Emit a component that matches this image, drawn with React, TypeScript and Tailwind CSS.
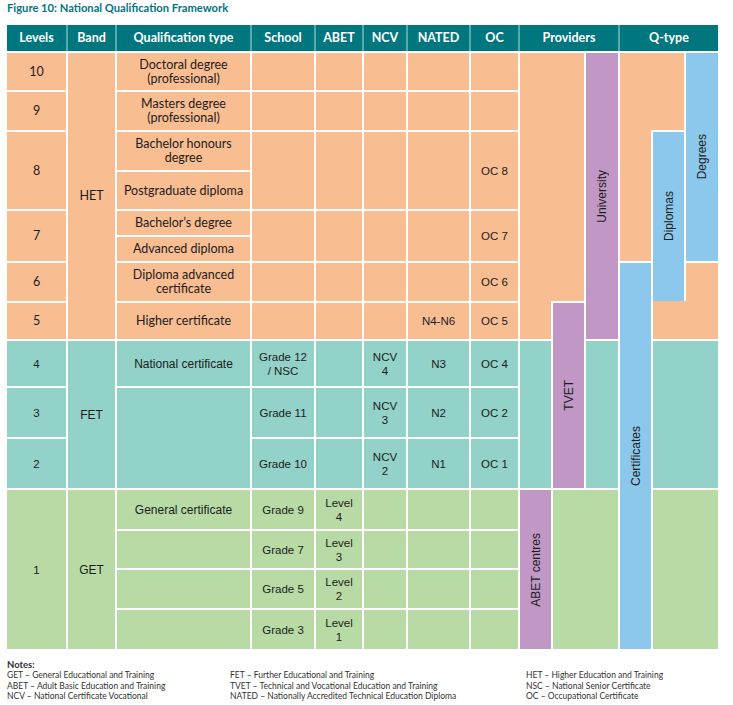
import React from "react";

const P = "bg-[#f9bd92]";
const T = "bg-[#93d2c8]";
const G = "bg-[#b8dba5]";
const U = "bg-[#c197c5]";
const B = "bg-[#8bc8ec]";

const lato = "font-['Lato',sans-serif] text-[12.5px]";
const arial = "font-['Liberation_Sans',Arial,sans-serif] text-[11.5px]";
const arial12 = "font-['Liberation_Sans',Arial,sans-serif] text-[12px]";

const COLS =
  "grid-cols-[59px_47px_133px_62px_46px_42px_61px_47px_31px_31px_32px_31px_31px_32px]";
const ROWS =
  "grid-rows-[37px_38px_38px_37px_24px_24px_38px_36px_45px_49px_49px_39px_37px_38px_39px]";

const rowPos = [
  "row-start-1",
  "row-start-2",
  "row-start-3 row-span-2",
  "row-start-5 row-span-2",
  "row-start-7",
  "row-start-8",
  "row-start-9",
  "row-start-10",
  "row-start-11",
  "row-start-12",
  "row-start-13",
  "row-start-14",
  "row-start-15",
];
const rowBg = [P, P, P, P, P, P, T, T, T, G, G, G, G];

type Cell = { pos: string; bg: string; text?: React.ReactNode; font?: string };

function Box({ pos, bg, text, font }: Cell) {
  return (
    <div
      className={`${pos} ${bg} flex items-center justify-center text-center text-[#1c1c1c] ${
        font ?? arial
      } leading-[14px]`}
    >
      {text}
    </div>
  );
}

function V({ children }: { children: React.ReactNode }) {
  return (
    <span
      className={`font-['Liberation_Sans',Arial,sans-serif] text-[12px] leading-[14px] text-[#1c1c1c] [writing-mode:vertical-rl] rotate-180 whitespace-nowrap`}
    >
      {children}
    </span>
  );
}

const colData: { col: string; texts: (React.ReactNode | null)[] }[] = [
  {
    col: "col-start-4",
    texts: [
      null, null, null, null, null, null,
      <>Grade 12<br />/ NSC</>,
      "Grade 11",
      "Grade 10",
      "Grade 9",
      "Grade 7",
      "Grade 5",
      "Grade 3",
    ],
  },
  {
    col: "col-start-5",
    texts: [
      null, null, null, null, null, null, null, null, null,
      <>Level<br />4</>,
      <>Level<br />3</>,
      <>Level<br />2</>,
      <>Level<br />1</>,
    ],
  },
  {
    col: "col-start-6",
    texts: [
      null, null, null, null, null, null,
      <>NCV<br />4</>,
      <>NCV<br />3</>,
      <>NCV<br />2</>,
      null, null, null, null,
    ],
  },
  {
    col: "col-start-7",
    texts: [
      null, null, null, null, null, "N4-N6", "N3", "N2", "N1", null, null, null, null,
    ],
  },
  {
    col: "col-start-8",
    texts: [
      null, null, "OC 8", "OC 7", "OC 6", "OC 5", "OC 4", "OC 2", "OC 1", null, null, null, null,
    ],
  },
];

const levels: Cell[] = [
  { pos: "col-start-1 row-start-1", bg: P, text: "10", font: lato },
  { pos: "col-start-1 row-start-2", bg: P, text: "9", font: lato },
  { pos: "col-start-1 row-start-3 row-span-2", bg: P, text: "8", font: lato },
  { pos: "col-start-1 row-start-5 row-span-2", bg: P, text: "7", font: lato },
  { pos: "col-start-1 row-start-7", bg: P, text: "6", font: lato },
  { pos: "col-start-1 row-start-8", bg: P, text: "5", font: lato },
  { pos: "col-start-1 row-start-9", bg: T, text: "4" },
  { pos: "col-start-1 row-start-10", bg: T, text: "3" },
  { pos: "col-start-1 row-start-11", bg: T, text: "2" },
  { pos: "col-start-1 row-start-12 row-span-4", bg: G, text: "1" },
  { pos: "col-start-2 row-start-1 row-span-8", bg: P, text: "HET", font: lato },
  { pos: "col-start-2 row-start-9 row-span-3", bg: T, text: "FET", font: arial12 },
  { pos: "col-start-2 row-start-12 row-span-4", bg: G, text: "GET", font: arial12 },
];

const quals: Cell[] = [
  { pos: "col-start-3 row-start-1", bg: P, text: <>Doctoral degree<br />(professional)</>, font: lato },
  { pos: "col-start-3 row-start-2", bg: P, text: <>Masters degree<br />(professional)</>, font: lato },
  { pos: "col-start-3 row-start-3", bg: P, text: <>Bachelor honours<br />degree</>, font: lato },
  { pos: "col-start-3 row-start-4", bg: P, text: "Postgraduate diploma", font: lato },
  { pos: "col-start-3 row-start-5", bg: P, text: "Bachelor’s degree", font: lato },
  { pos: "col-start-3 row-start-6", bg: P, text: "Advanced diploma", font: lato },
  { pos: "col-start-3 row-start-7", bg: P, text: <>Diploma advanced<br />certificate</>, font: lato },
  { pos: "col-start-3 row-start-8", bg: P, text: "Higher certificate", font: lato },
  { pos: "col-start-3 row-start-9", bg: T, text: "National certificate", font: arial12 },
  { pos: "col-start-3 row-start-10 row-span-2", bg: T },
  { pos: "col-start-3 row-start-12", bg: G, text: "General certificate", font: arial12 },
  { pos: "col-start-3 row-start-13", bg: G },
  { pos: "col-start-3 row-start-14", bg: G },
  { pos: "col-start-3 row-start-15", bg: G },
];

const headers: { pos: string; label: string }[] = [
  { pos: "col-start-1", label: "Levels" },
  { pos: "col-start-2", label: "Band" },
  { pos: "col-start-3", label: "Qualification type" },
  { pos: "col-start-4", label: "School" },
  { pos: "col-start-5", label: "ABET" },
  { pos: "col-start-6", label: "NCV" },
  { pos: "col-start-7", label: "NATED" },
  { pos: "col-start-8", label: "OC" },
  { pos: "col-start-9 col-span-3", label: "Providers" },
  { pos: "col-start-12 col-span-3", label: "Q-type" },
];

const notes = [
  ["GET – General Educational and Training", "FET – Further Educational and Training", "HET – Higher Education and Training"],
  ["ABET – Adult Basic Education and Training", "TVET – Technical and Vocational Education and Training", "NSC – National Senior Certificate"],
  ["NCV – National Certificate Vocational", "NATED – Nationally Accredited Technical Education Diploma", "OC – Occupational Certificate"],
];

export default function App() {
  return (
    <div className="w-[733px] h-[705px] bg-white pl-[7px] overflow-hidden">
      <div className="font-['Lato',sans-serif] font-bold text-[11.2px] leading-[16px] text-[#00767f] mb-[9px]">
        Figure 10: National Qualification Framework
      </div>

      {/* header */}
      <div className={`grid ${COLS} grid-rows-[26px] gap-x-[2px] bg-[#5aa8ae] w-[711px]`}>
        {headers.map((h) => (
          <div
            key={h.label}
            className={`${h.pos} row-start-1 bg-[#00767f] flex items-center justify-center text-white font-bold font-['Lato',sans-serif] text-[12.5px]`}
          >
            {h.label}
          </div>
        ))}
      </div>

      {/* body */}
      <div className={`grid ${COLS} ${ROWS} gap-[2px] mt-[2px] w-[711px]`}>
        {levels.map((c, i) => (
          <Box key={`l${i}`} {...c} />
        ))}
        {quals.map((c, i) => (
          <Box key={`q${i}`} {...c} />
        ))}
        {colData.map((cd) =>
          rowPos.map((rp, i) => (
            <Box
              key={`${cd.col}-${i}`}
              pos={`${cd.col} ${rp}`}
              bg={rowBg[i]}
              text={cd.texts[i]}
            />
          ))
        )}

        {/* Providers */}
        <div className={`col-start-9 col-span-2 row-start-1 row-span-7 ${P}`} />
        <div className={`col-start-9 row-start-8 ${P} -mt-[2px]`} />
        <div className={`col-start-11 row-start-1 row-span-8 ${U} flex items-center justify-center`}>
          <V>University</V>
        </div>
        <div className={`col-start-10 row-start-8 row-span-4 ${U} flex items-center justify-center`}>
          <V>TVET</V>
        </div>
        <div className={`col-start-9 row-start-9 row-span-3 ${T}`} />
        <div className={`col-start-11 row-start-9 row-span-3 ${T}`} />
        <div className={`col-start-9 row-start-12 row-span-4 ${U} flex items-center justify-center`}>
          <V>ABET centres</V>
        </div>
        <div className={`col-start-10 col-span-2 row-start-12 row-span-4 ${G}`} />

        {/* Q-type */}
        <div className={`col-start-12 col-span-2 row-start-1 row-span-2 ${P}`} />
        <div className={`col-start-12 row-start-3 row-span-4 ${P} -mt-[2px]`} />
        <div className={`col-start-14 row-start-1 row-span-6 ${B} flex items-center justify-center`}>
          <V>Degrees</V>
        </div>
        <div className={`col-start-13 row-start-3 row-span-5 ${B} flex items-center justify-center`}>
          <V>Diplomas</V>
        </div>
        <div className={`col-start-12 row-start-7 row-span-9 ${B} flex items-center justify-center`}>
          <V>Certificates</V>
        </div>
        <div className={`col-start-14 row-start-7 ${P}`} />
        <div className={`col-start-13 col-span-2 row-start-8 ${P} -mt-[2px]`} />
        <div className={`col-start-13 col-span-2 row-start-9 row-span-3 ${T}`} />
        <div className={`col-start-13 col-span-2 row-start-12 row-span-4 ${G}`} />
      </div>

      {/* notes */}
      <div className="font-['Lato',sans-serif] text-[#333] mt-[10px]">
        <div className="font-bold text-[9.5px] leading-[11px]">Notes:</div>
        <div className="grid grid-cols-[223px_296px_1fr] text-[8.5px] leading-[10.5px]">
          {notes.map((row, i) =>
            row.map((t, j) => <div key={`${i}-${j}`}>{t}</div>)
          )}
        </div>
      </div>
    </div>
  );
}
